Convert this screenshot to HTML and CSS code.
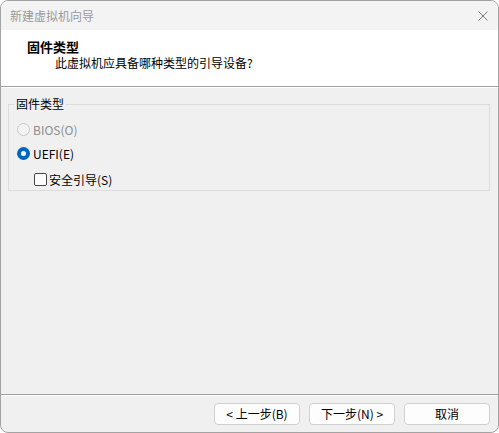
FILE: index.html
```html
<!DOCTYPE html>
<html lang="zh-CN">
<head>
<meta charset="utf-8">
<title>新建虚拟机向导</title>
<link rel="stylesheet" href="styles.css">
</head>
<body>
<div class="window">
  <div class="titlebar">
    <span class="title">新建虚拟机向导</span>
    <svg class="close" width="10" height="10" viewBox="0 0 10 10"><path d="M0.5 0.5 L9.5 9.5 M9.5 0.5 L0.5 9.5" stroke="#7a7a7a" stroke-width="1" fill="none"/></svg>
  </div>
  <div class="header">
    <div class="header-title">固件类型</div>
    <div class="header-sub">此虚拟机应具备哪种类型的引导设备?</div>
  </div>
  <div class="content">
    <fieldset class="group">
      <legend class="group-label">固件类型</legend>
      <div class="row disabled"><span class="radio"></span><span>BIOS(O)</span></div>
      <div class="row"><span class="radio checked"></span><span>UEFI(E)</span></div>
      <div class="row check-row"><span class="checkbox"></span><span>安全引导(S)</span></div>
    </fieldset>
  </div>
  <div class="footer">
    <button class="btn">&lt; 上一步(B)</button>
    <button class="btn">下一步(N) &gt;</button>
    <button class="btn">取消</button>
  </div>
</div>
</body>
</html>
```
FILE: styles.css
```css
html, body {
  margin: 0;
  padding: 0;
  background: #ffffff;
}

body {
  font-family: "Noto Sans CJK SC", "Noto Sans", sans-serif;
  font-size: 12px;
  color: #000;
}

.window {
  width: 499px;
  height: 433px;
  box-sizing: border-box;
  border: 1px solid #a3a3a3;
  border-radius: 8px;
  overflow: hidden;
  background: #f0f0f0;
  display: flex;
  flex-direction: column;
}

.titlebar {
  height: 29px;
  background: #f3f3f3;
  display: flex;
  align-items: center;
  justify-content: space-between;
  padding: 0 10px 0 9px;
  flex: none;
}

.title {
  color: #9a9a9a;
  line-height: 29px;
}

.close {
  display: block;
}

.header {
  height: 57px;
  box-sizing: border-box;
  background: #ffffff;
  padding: 8px 0 0 26px;
  border-bottom: 1px solid #a0a0a0;
  box-shadow: 0 1px 0 #ffffff;
  flex: none;
}

.header-title {
  font-weight: bold;
  font-size: 13px;
  line-height: 17px;
}

.header-sub {
  line-height: 16px;
  padding-left: 28px;
}

.content {
  flex: 1;
  padding: 9px 8px 0 7px;
}

.group {
  margin: 0;
  padding: 6px 0 0 8px;
  border: 1px solid #dcdcdc;
  height: 95px;
  box-sizing: border-box;
}

.group-label {
  padding: 0 2px;
  line-height: 16px;
  margin-left: -3px;
}

.row {
  display: flex;
  align-items: center;
  height: 22px;
  gap: 3px;
}

.row + .row {
  margin-top: 2px;
}

.row.check-row {
  margin-top: 4px;
  padding-left: 17px;
  gap: 2px;
}

.disabled {
  color: #8d8d8d;
}

.radio {
  width: 13px;
  height: 13px;
  box-sizing: border-box;
  border-radius: 50%;
  border: 1px solid #8a8a8a;
  background: #f6f6f6;
  display: flex;
  align-items: center;
  justify-content: center;
}

.disabled .radio {
  border-color: #c9c9c9;
  background: #f3f3f3;
}

.radio.checked {
  border: none;
  background: #0067c0;
}

.radio.checked::after {
  content: "";
  width: 5px;
  height: 5px;
  border-radius: 50%;
  background: #ffffff;
}

.checkbox {
  width: 13px;
  height: 13px;
  box-sizing: border-box;
  border: 1px solid #444;
  border-radius: 2px;
  background: #fbfbfb;
}

.footer {
  height: 38px;
  box-sizing: border-box;
  border-top: 1px solid #a0a0a0;
  box-shadow: inset 0 1px 0 #ffffff;
  padding: 8px 8px 0 0;
  display: flex;
  justify-content: flex-end;
  align-items: flex-start;
  gap: 9px;
  flex: none;
}

.btn {
  width: 86px;
  height: 22px;
  box-sizing: border-box;
  border: 1px solid #d0d0d0;
  border-radius: 4px;
  background: #fdfdfd;
  font-family: inherit;
  font-size: 12px;
  color: #000;
  padding: 0;
  line-height: 20px;
}
```
